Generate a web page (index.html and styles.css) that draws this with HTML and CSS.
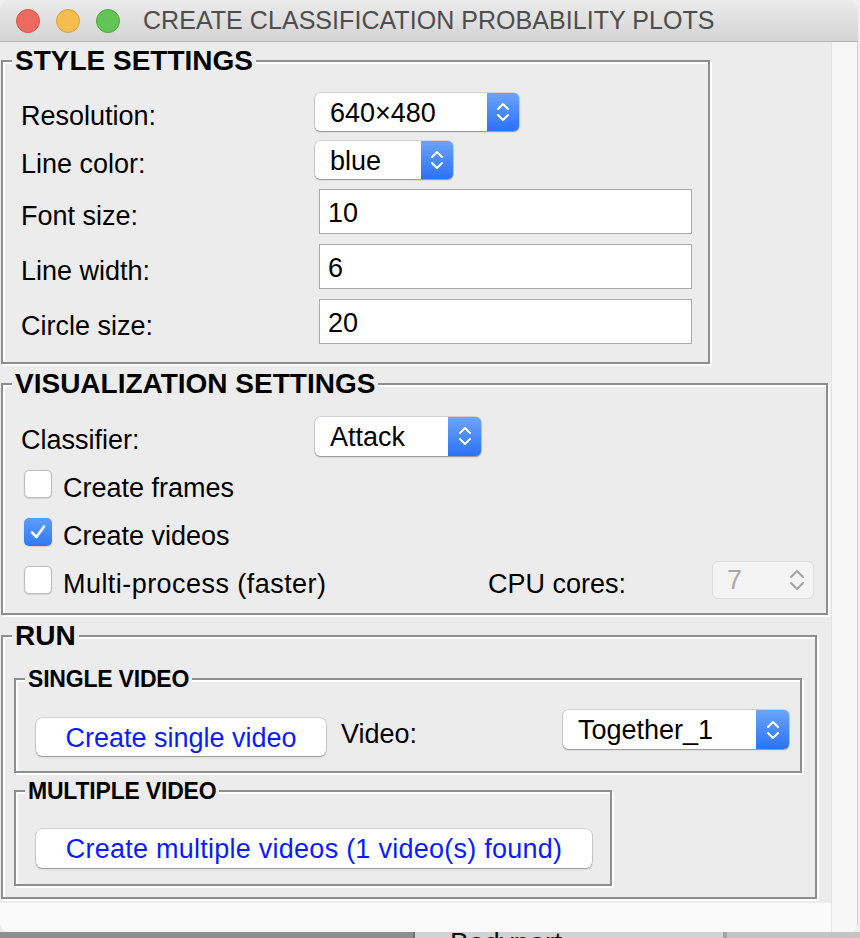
FILE: index.html
```html
<!DOCTYPE html>
<html>
<head>
<meta charset="utf-8">
<link rel="stylesheet" href="styles.css">
</head>
<body>
<div class="window">
  <div class="titlebar">
    <span class="light red"></span><span class="light yellow"></span><span class="light green"></span>
    <span class="title">CREATE CLASSIFICATION PROBABILITY PLOTS</span>
  </div>
  <div class="wbody">
    <div class="main">
      <div class="content">
        <fieldset class="group style-group">
          <legend>STYLE SETTINGS</legend>
          <div class="form-grid">
            <span class="label">Resolution:</span>
            <div class="popup w-res"><span class="popup-text">640×480</span><span class="stepper"><svg width="14" height="24" viewBox="0 0 14 24"><polyline points="2,9 7,4 12,9"/><polyline points="2,15 7,20 12,15"/></svg></span></div>
            <span class="label">Line color:</span>
            <div class="popup w-color"><span class="popup-text">blue</span><span class="stepper"><svg width="14" height="24" viewBox="0 0 14 24"><polyline points="2,9 7,4 12,9"/><polyline points="2,15 7,20 12,15"/></svg></span></div>
            <span class="label">Font size:</span>
            <div class="entry">10</div>
            <span class="label">Line width:</span>
            <div class="entry">6</div>
            <span class="label">Circle size:</span>
            <div class="entry">20</div>
          </div>
        </fieldset>

        <fieldset class="group viz-group">
          <legend>VISUALIZATION SETTINGS</legend>
          <div class="viz-inner">
            <div class="viz-row">
              <span class="label label-col">Classifier:</span>
              <div class="popup w-clf"><span class="popup-text">Attack</span><span class="stepper"><svg width="14" height="24" viewBox="0 0 14 24"><polyline points="2,9 7,4 12,9"/><polyline points="2,15 7,20 12,15"/></svg></span></div>
            </div>
            <div class="viz-row">
              <label class="check"><span class="box"></span><span class="check-text">Create frames</span></label>
            </div>
            <div class="viz-row">
              <label class="check"><span class="box checked"><svg width="28" height="28" viewBox="0 0 28 28"><polyline points="8,14.5 12.5,19 20,8.5"/></svg></span><span class="check-text">Create videos</span></label>
            </div>
            <div class="viz-row">
              <label class="check check-wide"><span class="box"></span><span class="check-text wide-text">Multi-process (faster)</span></label>
              <span class="label cpu-label">CPU cores:</span>
              <div class="spin"><span>7</span><svg width="16" height="24" viewBox="0 0 16 24"><polyline points="2,9 8,3 14,9"/><polyline points="2,15 8,21 14,15"/></svg></div>
            </div>
          </div>
        </fieldset>

        <fieldset class="group run-group">
          <legend>RUN</legend>
          <div class="run-inner">
            <fieldset class="group sub single-group">
              <legend>SINGLE VIDEO</legend>
              <div class="single-row">
                <div class="btn btn-single">Create single video</div>
                <span class="label video-label">Video:</span>
                <div class="popup w-video"><span class="popup-text">Together_1</span><span class="stepper"><svg width="14" height="24" viewBox="0 0 14 24"><polyline points="2,9 7,4 12,9"/><polyline points="2,15 7,20 12,15"/></svg></span></div>
              </div>
            </fieldset>
            <fieldset class="group sub multi-group">
              <legend>MULTIPLE VIDEO</legend>
              <div class="multi-inner">
                <div class="btn btn-multi">Create multiple videos (1 video(s) found)</div>
              </div>
            </fieldset>
          </div>
        </fieldset>
      </div>
      <div class="footer"></div>
    </div>
    <div class="strip"></div>
  </div>
</div>
<div class="behind">
  <div class="behind-left"></div>
  <div class="behind-panel"><span class="behind-text">Bodypart</span></div>
  <div class="behind-right"></div>
</div>
</body>
</html>
```

FILE: styles.css
```css
* { box-sizing: border-box; }
html, body { margin: 0; padding: 0; }
body {
  width: 860px;
  height: 938px;
  overflow: hidden;
  background: #eeeeee;
  font-family: "Liberation Sans", Arial, sans-serif;
  color: #000;
}

.window {
  width: 858px;
  height: 932px;
  display: flex;
  flex-direction: column;
  border-radius: 10px 10px 9px 9px;
  overflow: hidden;
  background: #ececec;
}

.titlebar {
  flex: none;
  height: 42px;
  display: flex;
  align-items: center;
  padding-left: 16px;
  background: linear-gradient(#ebebeb, #d4d4d4);
  border-bottom: 1px solid #b3b3b3;
}
.light {
  width: 24px;
  height: 24px;
  border-radius: 50%;
  margin-right: 16px;
}
.red { background: #ee6a5f; border: 1px solid #d5574b; }
.yellow { background: #f5bd4f; border: 1px solid #d8a03c; }
.green { background: #61c454; border: 1px solid #4ea83e; }
.title {
  margin-left: 7px;
  font-size: 25px;
  letter-spacing: 0.05px;
  color: #4d4d4d;
  white-space: nowrap;
}

.wbody { flex: 1; display: flex; }
.main { width: 831px; display: flex; flex-direction: column; }
.content {
  height: 861px;
  background: #ececec;
  padding: 0 0 0 1px;
}
.footer { flex: 1; background: #fafafa; }
.strip {
  flex: 1;
  background: #f7f7f7;
  border-left: 1px solid #e4e4e4;
  border-right: 1px solid #cfcfcf;
}

/* group boxes (Tk groove label frames) */
.group {
  margin: 0;
  padding: 0;
  min-width: 0;
  border: 2px solid #8e8e8e;
  box-shadow: inset 2px 2px 0 #ffffff, 2px 2px 0 #ffffff;
}
.group > legend {
  margin-left: 9px;
  padding: 0 3px;
  font-weight: bold;
  font-size: 28px;
  line-height: 33px;
  background: #ececec;
  white-space: nowrap;
}
.group.sub > legend {
  font-size: 23px;
  line-height: 28px;
  letter-spacing: -0.2px;
}

.label {
  font-size: 27px;
  line-height: 28px;
  white-space: nowrap;
  padding-top: 8px;
}

/* style settings */
.style-group { width: 709px; margin-top: 2px; }
.form-grid {
  display: grid;
  grid-template-columns: 294px auto;
  row-gap: 10px;
  align-items: center;
  justify-items: start;
  padding: 16px 0 18px 18px;
}

.popup {
  display: flex;
  height: 38px;
  border-radius: 5px;
  background: #fff;
  overflow: hidden;
  box-shadow: 0 0 0 0.5px rgba(0,0,0,0.22), 0 1px 1.5px rgba(0,0,0,0.3);
}
.popup-text {
  flex: 1;
  display: flex;
  align-items: center;
  padding-left: 15px;
  padding-top: 2px;
  font-size: 27px;
  white-space: nowrap;
}
.stepper {
  width: 32px;
  flex: none;
  display: flex;
  align-items: center;
  justify-content: center;
  background: linear-gradient(#6ba5f9, #2b71f6);
}
.stepper svg polyline {
  fill: none;
  stroke: #fff;
  stroke-width: 2;
  stroke-linecap: round;
  stroke-linejoin: round;
}
.w-res { width: 204px; }
.w-color { width: 138px; }
.w-clf { width: 166px; height: 39px; }
.w-clf .stepper { width: 33px; }
.w-video { width: 226px; height: 39px; }
.w-video .stepper { width: 33px; }

.entry {
  margin-left: 4px;
  width: 373px;
  height: 45px;
  background: #fff;
  border: 1px solid #aaaaaa;
  padding-left: 8px;
  padding-top: 3px;
  display: flex;
  align-items: center;
  font-size: 27px;
}

/* visualization settings */
.viz-group { width: 827px; margin-top: 3px; }
.viz-inner {
  display: flex;
  flex-direction: column;
  gap: 8px;
  padding: 16px 12px 13px 18px;
}
.viz-row {
  height: 40px;
  display: flex;
  align-items: center;
}
.label-col { width: 294px; }
.check {
  display: flex;
  align-items: center;
  margin-left: 3px;
}
.check-wide { flex: 0 0 464px; }
.box {
  width: 28px;
  height: 28px;
  flex: none;
  border-radius: 5px;
  background: #fff;
  border: 1px solid #bdbdbd;
  box-shadow: 0 0.5px 1px rgba(0,0,0,0.12);
}
.box.checked {
  border: none;
  background: linear-gradient(#5c9ef9, #3178f6);
}
.box.checked svg polyline {
  fill: none;
  stroke: #fff;
  stroke-width: 2.6;
  stroke-linecap: round;
  stroke-linejoin: round;
}
.box svg { display: block; }
.check-text {
  margin-left: 11px;
  font-size: 27px;
  line-height: 28px;
  white-space: nowrap;
  padding-top: 8px;
}
.wide-text { letter-spacing: 0.45px; }
.cpu-label { width: 224px; }
.spin {
  width: 102px;
  height: 38px;
  border-radius: 6px;
  background: #f4f4f4;
  border: 1px solid #dcdcdc;
  display: flex;
  align-items: center;
  justify-content: space-between;
  padding: 0 8px 0 14px;
  color: #a9a9a9;
  font-size: 27px;
}
.spin svg polyline {
  fill: none;
  stroke: #a2a2a2;
  stroke-width: 2;
  stroke-linecap: round;
  stroke-linejoin: round;
}

/* run */
.run-group { width: 816px; margin-top: 4px; }
.run-inner { padding: 13px 0 11px 11px; }
.single-group { width: 788px; }
.single-row {
  height: 46px;
  display: flex;
  align-items: center;
  margin: 17px 11px 15px 20px;
}
.btn {
  display: flex;
  align-items: center;
  justify-content: center;
  padding-top: 2px;
  background: #fff;
  border-radius: 6px;
  box-shadow: 0 0 0 0.5px rgba(0,0,0,0.2), 0 1px 1.5px rgba(0,0,0,0.3);
  color: #0a1cff;
  font-size: 27px;
  white-space: nowrap;
}
.btn-single { width: 290px; height: 38px; align-self: flex-end; }
.video-label { margin-left: 15px; padding-top: 2px; }
.w-video { margin-left: auto; align-self: flex-start; }

.multi-group { width: 598px; margin-top: 4px; }
.multi-inner { padding: 24px 0 16px 20px; }
.btn-multi { width: 556px; height: 39px; letter-spacing: 0.25px; }

/* window behind */
.behind {
  height: 6px;
  display: flex;
  overflow: hidden;
  background: #8e8e8e;
}
.behind-left { width: 413px; flex: none; }
.behind-panel {
  width: 314px;
  flex: none;
  background: #d2d2d2;
  border-left: 2px solid #6e6e6e;
  border-right: 4px solid #a5a5a5;
  padding-left: 35px;
}
.behind-text {
  display: block;
  margin-top: -4px;
  font-size: 28px;
  line-height: 30px;
  color: #111;
}
.behind-right { flex: 1; background: #c4c4c4; }
```
